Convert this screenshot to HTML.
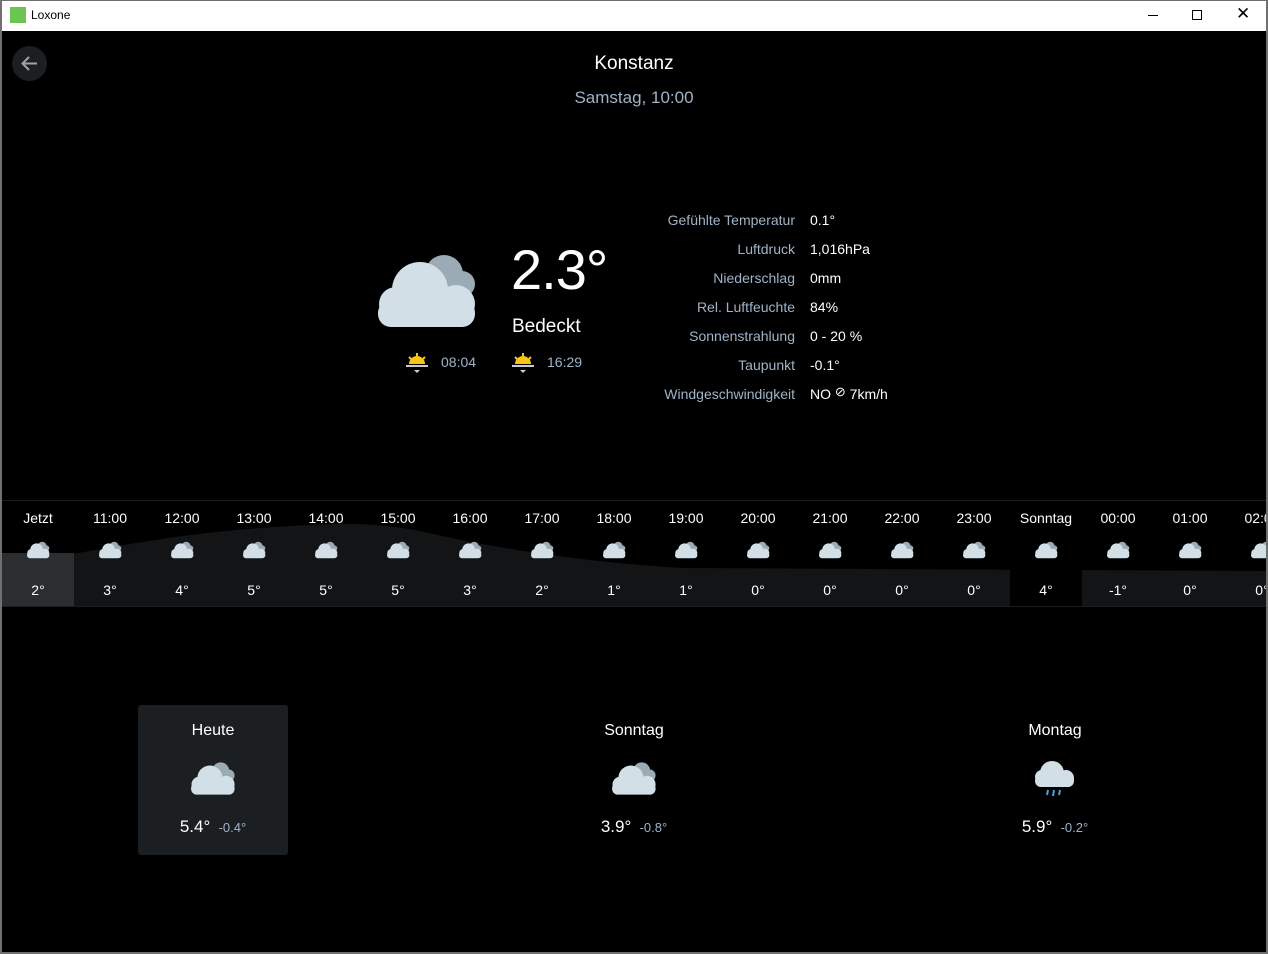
<!DOCTYPE html>
<html><head><meta charset="utf-8"><style>
*{margin:0;padding:0;box-sizing:border-box}
body{width:1268px;height:954px;background:#707070;font-family:"Liberation Sans",sans-serif;overflow:hidden;position:relative}
#tb{position:absolute;left:2px;top:1px;width:1264px;height:30px;background:#fff}
#main{position:absolute;left:2px;top:31px;width:1264px;height:921px;background:#000;overflow:hidden;color:#fff}
.a{position:absolute}
.lbl{color:#9fb4c8;font-size:14px;text-align:right;width:200px;left:593px}
.val{font-size:14px;left:808px}
.col{position:absolute;width:72px;text-align:center;font-size:14px}
</style></head><body>
<svg width="0" height="0" style="position:absolute"><defs>
<symbol id="cl" viewBox="0 0 100 78">
<circle cx="66" cy="22" r="19" fill="#9aabb5"/><circle cx="84" cy="32" r="13" fill="#9aabb5"/>
<circle cx="42" cy="38" r="28" fill="#d3dfe7"/><circle cx="18" cy="52" r="17" fill="#d3dfe7"/><circle cx="78" cy="52" r="19" fill="#d3dfe7"/>
<rect x="0" y="48" width="97" height="27" rx="13" fill="#d3dfe7"/>
</symbol></defs></svg>
<div id="tb">
<div class="a" style="left:8px;top:6px;width:16px;height:16px;background:#6cc551"></div>
<div class="a" style="left:29px;top:7px;font-size:12px;color:#000">Loxone</div>
<div class="a" style="left:1146px;top:14px;width:10px;height:1px;background:#000"></div>
<div class="a" style="left:1190px;top:9px;width:10px;height:10px;border:1px solid #000"></div>
<div class="a" style="left:1234px;top:3px;font-size:17px;color:#000">✕</div>
</div>
<div id="main">
<div class="a" style="left:10px;top:15px;width:35px;height:35px;border-radius:50%;background:#1c1f22"></div>
<svg class="a" style="left:17px;top:22px" width="21" height="21" viewBox="0 0 21 21"><path d="M18 10.5H4M10 4L3.5 10.5L10 17" stroke="#a0a4a8" stroke-width="2" fill="none"/></svg>
<div class="a" style="left:0;width:1264px;top:22px;text-align:center;font-size:19px">Konstanz</div>
<div class="a" style="left:0;width:1264px;top:57px;text-align:center;font-size:17px;color:#9fb4c8">Samstag, 10:00</div>
<svg class="a" style="left:376px;top:221px" width="100" height="78"><use href="#cl"/></svg>
<div class="a" style="left:509px;top:206px;font-size:56px;letter-spacing:-1px">2.3°</div>
<div class="a" style="left:510px;top:285px;font-size:19px">Bedeckt</div>
<svg class="a" style="left:402px;top:320px" width="26" height="24" viewBox="0 0 26 24"><path d="M5 13a8 8 0 0 1 16 0z" fill="#f5c518"/><path d="M13 2v3M5 6l2 2M21 6l-2 2" stroke="#f5c518" stroke-width="2"/><rect x="2" y="14" width="22" height="2" fill="#ccc"/><path d="M10 19h6l-3 3z" fill="#ccc"/></svg>
<div class="a" style="left:439px;top:323px;font-size:14px;color:#9fb4c8">08:04</div>
<svg class="a" style="left:508px;top:320px" width="26" height="24" viewBox="0 0 26 24"><path d="M5 13a8 8 0 0 1 16 0z" fill="#f5c518"/><path d="M13 2v3M5 6l2 2M21 6l-2 2" stroke="#f5c518" stroke-width="2"/><rect x="2" y="14" width="22" height="2" fill="#ccc"/><path d="M10 19h6l-3 3z" fill="#ccc"/></svg>
<div class="a" style="left:545px;top:323px;font-size:14px;color:#9fb4c8">16:29</div>
<div class="a lbl" style="top:181px">Gefühlte Temperatur</div><div class="a val" style="top:181px">0.1°</div>
<div class="a lbl" style="top:210px">Luftdruck</div><div class="a val" style="top:210px">1,016hPa</div>
<div class="a lbl" style="top:239px">Niederschlag</div><div class="a val" style="top:239px">0mm</div>
<div class="a lbl" style="top:268px">Rel. Luftfeuchte</div><div class="a val" style="top:268px">84%</div>
<div class="a lbl" style="top:297px">Sonnenstrahlung</div><div class="a val" style="top:297px">0 - 20 %</div>
<div class="a lbl" style="top:326px">Taupunkt</div><div class="a val" style="top:326px">-0.1°</div>
<div class="a lbl" style="top:355px">Windgeschwindigkeit</div><div class="a val" style="top:355px">NO <span style="font-size:13px;position:relative;top:-3px">⊘</span> 7km/h</div>
<div class="a" style="left:0;top:469px;width:1264px;height:1px;background:#1a1c1e"></div>
<div class="a" style="left:0;top:575px;width:1264px;height:1px;background:#1a1c1e"></div>
<svg class="a" style="left:0;top:470px" width="1264" height="105">
<path d="M0 55 L72 53 C130 42 200 30 288 25 C340 22 380 20 440 35 C520 52 600 62 680 67 L1264 70 L1264 105 L0 105Z" fill="#121416"/>
<rect x="0" y="52" width="72" height="53" fill="#2a2e31"/>
<rect x="1008" y="0" width="72" height="105" fill="#000"/>
</svg>
<div id="hrs"></div>
<div class="a" style="left:136px;top:674px;width:150px;height:150px;background:#1c1f22;border-radius:3px"></div>
<div class="a" style="left:136px;top:691px;width:150px;text-align:center;font-size:16px">Heute</div>
<svg class="a" style="left:189px;top:730px" width="45" height="35"><use href="#cl"/></svg>
<div class="a" style="left:136px;top:786px;width:150px;text-align:center;font-size:17px">5.4° <span style="font-size:13px;color:#9fb4c8">&nbsp;-0.4°</span></div>
<div class="a" style="left:557px;top:691px;width:150px;text-align:center;font-size:16px">Sonntag</div>
<svg class="a" style="left:610px;top:730px" width="45" height="35"><use href="#cl"/></svg>
<div class="a" style="left:557px;top:786px;width:150px;text-align:center;font-size:17px">3.9° <span style="font-size:13px;color:#9fb4c8">&nbsp;-0.8°</span></div>
<div class="a" style="left:978px;top:691px;width:150px;text-align:center;font-size:16px">Montag</div>
<svg class="a" style="left:1032px;top:728px" width="42" height="40" viewBox="0 0 42 40"><circle cx="18" cy="14" r="12" fill="#d3dfe7"/><circle cx="8" cy="18" r="7" fill="#d3dfe7"/><circle cx="32" cy="19" r="8" fill="#d3dfe7"/><rect x="1" y="16" width="39" height="12" rx="6" fill="#d3dfe7"/><path d="M14 31l-1 5M20 31l-1 6M26 31l-1 5" stroke="#4aa3e0" stroke-width="2"/></svg>
<div class="a" style="left:978px;top:786px;width:150px;text-align:center;font-size:17px">5.9° <span style="font-size:13px;color:#9fb4c8">&nbsp;-0.2°</span></div>
<script>
var L=["Jetzt","11:00","12:00","13:00","14:00","15:00","16:00","17:00","18:00","19:00","20:00","21:00","22:00","23:00","Sonntag","00:00","01:00","02:00"];
var T=["2°","3°","4°","5°","5°","5°","3°","2°","1°","1°","0°","0°","0°","0°","4°","-1°","0°","0°"];
var h="";for(var i=0;i<L.length;i++){var x=i*72;
h+='<div class="col" style="left:'+x+'px;top:479px">'+L[i]+'</div>';
h+='<svg class="a" style="left:'+(x+25)+'px;top:510px" width="23" height="18"><use href="#cl"/></svg>';
h+='<div class="col" style="left:'+x+'px;top:551px;font-size:14px">'+T[i]+'</div>';}
document.getElementById("hrs").innerHTML=h;
</script>
</div>
</body></html>
